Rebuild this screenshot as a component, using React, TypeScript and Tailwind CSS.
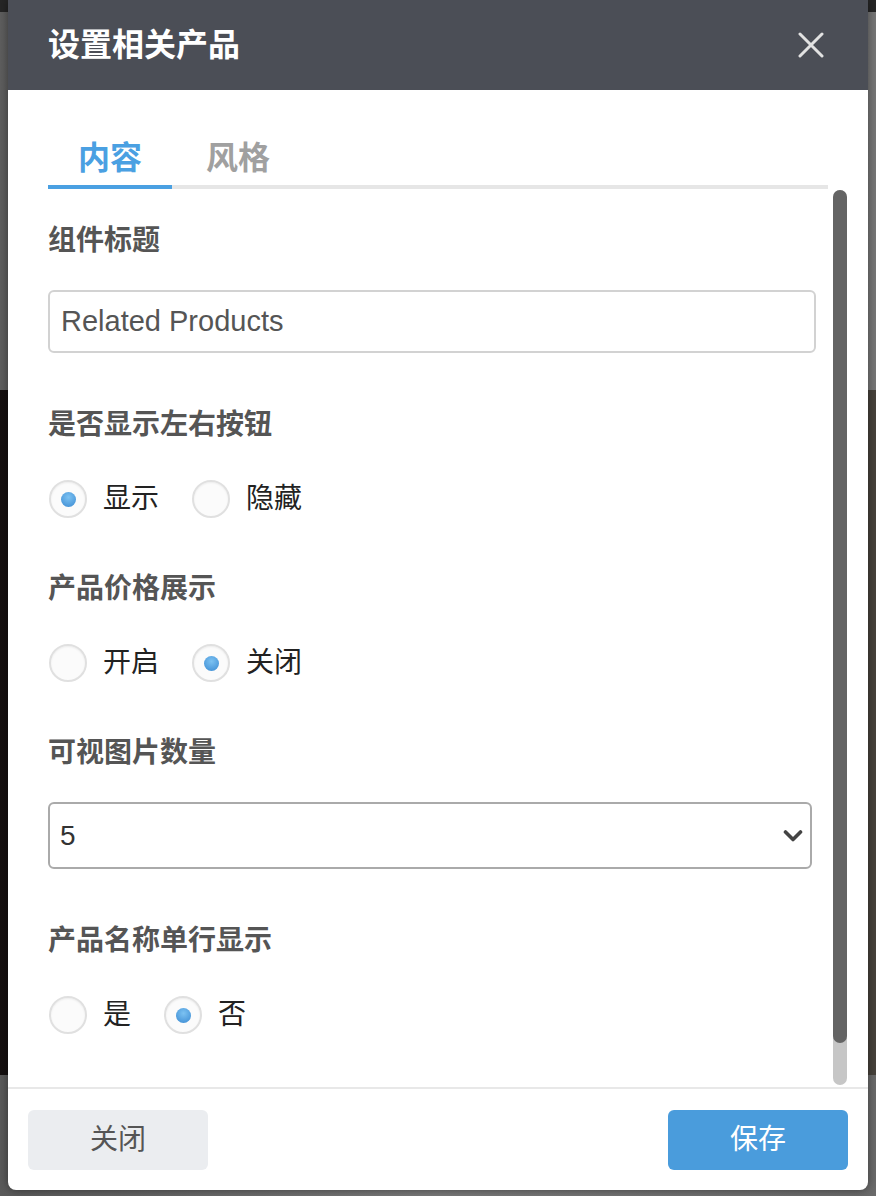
import React from "react";

const FONT = { fontFamily: '"Liberation Sans", "Noto Sans CJK SC", sans-serif' };

function Radio({ checked }: { checked: boolean }) {
  return (
    <span className="ml-[1px] flex h-[38px] w-[38px] shrink-0 items-center justify-center rounded-full border-2 border-[#e0e0e0] bg-[#fbfbfb] shadow-[inset_0_1px_2px_rgba(0,0,0,0.06)]">
      {checked && (
        <span className="h-[15px] w-[15px] rounded-full bg-[radial-gradient(circle_at_50%_35%,#7cc2f2,#3a8ad2)]" />
      )}
    </span>
  );
}

function RadioGroup({ options, value }: { options: string[]; value: number }) {
  return (
    <div className="mt-[34px] flex h-[40px] items-center">
      {options.map((o, i) => (
        <div key={o} className="flex items-center">
          <Radio checked={i === value} />
          <span className="ml-[16px] mr-[32px] text-[28px] leading-[40px] text-[#222]">{o}</span>
        </div>
      ))}
    </div>
  );
}

function Label({ children }: { children: React.ReactNode }) {
  return <div className="h-[40px] text-[28px] font-bold leading-[40px] text-[#555]">{children}</div>;
}

export default function App() {
  return (
    <div className="relative h-[1196px] w-[876px] overflow-hidden" style={FONT}>
      {/* dimmed page behind */}
      <div className="flex h-full w-full flex-col">
        <div className="h-[12px] bg-[#262626]" />
        <div className="h-[378px] bg-[linear-gradient(90deg,#5e5e5e,#8a8a8a_50%,#777)]" />
        <div className="h-[685px] bg-[linear-gradient(90deg,#151010,#2a2222_30%,#4a443e_70%,#47423c)]" />
        <div className="flex-1 bg-[linear-gradient(90deg,#5a5a5a,#7a7a7a_50%,#6a6a6a)]" />
      </div>

      {/* dialog */}
      <div className="absolute left-[8px] top-0 flex h-[1190px] w-[860px] flex-col overflow-hidden rounded-b-[8px] bg-white shadow-[0_0_10px_rgba(0,0,0,0.45)]">
        <div className="flex h-[90px] shrink-0 items-center justify-between bg-[#4b4e56] pl-[40px] pr-[44px]">
          <span className="text-[32px] font-bold text-white">设置相关产品</span>
          <svg width="26" height="26" viewBox="0 0 26 26">
            <path d="M2 2 L24 24 M24 2 L2 24" stroke="#e2e2e2" strokeWidth="3" strokeLinecap="round" />
          </svg>
        </div>

        <div className="mx-[40px] mt-[39px] flex shrink-0 border-b-4 border-[#e6e6e6]">
          <div className="-mb-[4px] h-[60px] border-b-4 border-[#4aa0e2] px-[30px] pt-[2px] text-[32px] font-bold leading-[54px] text-[#4aa0e2]">
            内容
          </div>
          <div className="-mb-[4px] h-[60px] pl-[34px] pr-[30px] pt-[2px] text-[32px] font-bold leading-[54px] text-[#a0a0a0]">
            风格
          </div>
        </div>

        <div className="flex min-h-0 flex-1">
          <div className="w-[808px] shrink-0 overflow-hidden pl-[40px] pt-[32px]">
            <Label>组件标题</Label>
            <div className="mt-[29px] flex h-[63px] w-[768px] items-center rounded-[6px] border-2 border-[#d2d2d2] px-[11px] text-[29px] text-[#555]">
              Related Products
            </div>

            <div className="mt-[52px]">
              <Label>是否显示左右按钮</Label>
              <RadioGroup options={["显示", "隐藏"]} value={0} />
            </div>

            <div className="mt-[50px]">
              <Label>产品价格展示</Label>
              <RadioGroup options={["开启", "关闭"]} value={1} />
            </div>

            <div className="mt-[50px]">
              <Label>可视图片数量</Label>
              <div className="mt-[29px] flex h-[67px] w-[764px] items-center justify-between rounded-[6px] border-2 border-[#aaaaaa] pl-[10px] pr-[7px] text-[28px] text-[#333]">
                <span>5</span>
                <svg width="20" height="14" viewBox="0 0 20 14">
                  <path d="M2.5 3 L10 10.5 L17.5 3" stroke="#444" strokeWidth="3.6" fill="none" strokeLinecap="round" strokeLinejoin="round" />
                </svg>
              </div>
            </div>

            <div className="mt-[52px]">
              <Label>产品名称单行显示</Label>
              <RadioGroup options={["是", "否"]} value={1} />
            </div>
          </div>

          <div className="mb-[2px] ml-[17px] mt-[1px] flex w-[14px] flex-col rounded-full bg-[#c6c6c6]">
            <div className="h-[853px] rounded-full bg-[#646464]" />
          </div>
        </div>

        <div className="flex shrink-0 justify-between border-t-2 border-[#e8e8e8] px-[20px] pb-[20px] pt-[21px]">
          <button className="flex h-[60px] w-[180px] items-center justify-center rounded-[6px] bg-[#ebedf0] text-[28px] text-[#555]">
            关闭
          </button>
          <button className="flex h-[60px] w-[180px] items-center justify-center rounded-[6px] bg-[#4a9cdc] text-[28px] text-white">
            保存
          </button>
        </div>
      </div>
    </div>
  );
}
